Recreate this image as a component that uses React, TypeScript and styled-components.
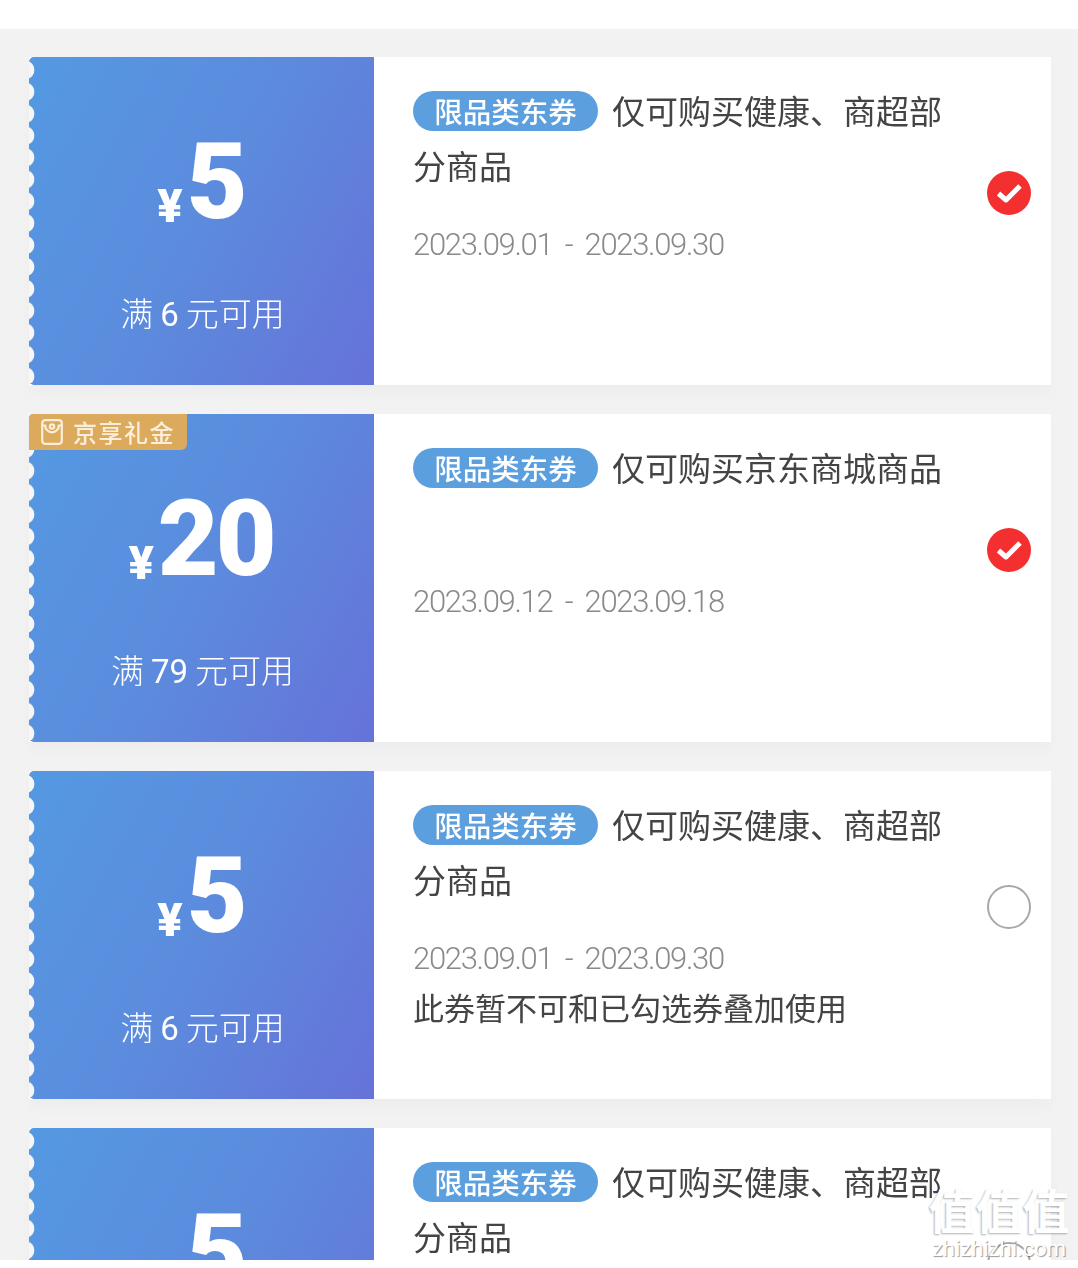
import styled, { createGlobalStyle } from "styled-components"

interface Coupon {
    amount: string
    min: string
    scope: string
    date: string
    note?: string
    gift?: boolean
    checked?: boolean
}

const coupons: Coupon[] = [
    { amount: "5", min: "6", scope: "仅可购买健康、商超部分商品", date: "2023.09.01 - 2023.09.30", checked: true },
    { amount: "20", min: "79", scope: "仅可购买京东商城商品", date: "2023.09.12 - 2023.09.18", gift: true, checked: true },
    { amount: "5", min: "6", scope: "仅可购买健康、商超部分商品", date: "2023.09.01 - 2023.09.30", note: "此券暂不可和已勾选券叠加使用" },
    { amount: "5", min: "6", scope: "仅可购买健康、商超部分商品", date: "2023.09.01 - 2023.09.30" },
]

const App = () => {
    return (
        <Page>
            <GlobalStyle />
            <TopBar />
            <List>
                {coupons.map((c, i) => (
                    <Card key={i}>
                        <Left>
                            {c.gift && (
                                <GiftBadge>
                                    <svg width="22" height="26" viewBox="0 0 22 26" fill="none" stroke="#fbeedb" strokeWidth="2.2">
                                        <rect x="1.2" y="1.2" width="19.6" height="23.6" rx="3" />
                                        <path d="M1.2 6.5h3a6.8 6.8 0 0 0 13.6 0h3" />
                                        <circle cx="11" cy="7.5" r="2.2" />
                                    </svg>
                                    <span>京享礼金</span>
                                </GiftBadge>
                            )}
                            <Price>
                                <Yen>¥</Yen>
                                <Amount>{c.amount}</Amount>
                            </Price>
                            <Threshold>满<Digit>{c.min}</Digit>元可用</Threshold>
                        </Left>
                        <Body>
                            <Content>
                                <Title>
                                    <Tag>限品类东券</Tag>
                                    {c.scope}
                                </Title>
                                <DateText>{c.date}</DateText>
                                {c.note && <Note>{c.note}</Note>}
                            </Content>
                            {c.checked ? (
                                <CheckIcon width="44" height="44" viewBox="0 0 44 44">
                                    <circle cx="22" cy="22" r="22" fill="#f3302f" />
                                    <path d="M11.5 22.5l7.5 6.5L33 15" fill="none" stroke="#fff" strokeWidth="5" strokeLinejoin="round" />
                                </CheckIcon>
                            ) : (
                                <Unchecked />
                            )}
                        </Body>
                    </Card>
                ))}
            </List>
            <BottomBar />
            <Watermark>
                <WatermarkGlyphs>值值值</WatermarkGlyphs>
                <WatermarkUrl>zhizhizhi.com</WatermarkUrl>
            </Watermark>
        </Page>
    )
}

const GlobalStyle = createGlobalStyle`
    body {
        margin: 0;
        background: #fff;
        font-family: "Noto Sans CJK SC", "Noto Sans", sans-serif;
    }
`

const Page = styled.div`
    position: relative;
    width: 1078px;
    height: 1268px;
    overflow: hidden;
    background: #fff;
`

const TopBar = styled.div`
    height: 29px;
    background: #fff;
`

const BottomBar = styled.div`
    height: 8px;
    background: #fff;
`

const List = styled.div`
    height: 1231px;
    box-sizing: border-box;
    padding: 28px 27px 0 29px;
    display: flex;
    flex-direction: column;
    gap: 29px;
    overflow: hidden;
    background: #f2f2f2;
    filter: blur(0.5px);
`

const Card = styled.div`
    flex: none;
    display: flex;
    height: 328px;
    background: #fff;
    box-shadow: 0 9px 14px rgba(0, 0, 0, 0.025);
`

const Left = styled.div`
    position: relative;
    flex: none;
    width: 345px;
    box-sizing: border-box;
    padding-top: 68px;
    display: flex;
    flex-direction: column;
    align-items: center;
    color: #fff;
    border-radius: 5px 0 0 5px;
    background: linear-gradient(118deg, #5499e2 0%, #5c8bdd 50%, #6672d9 100%);
    &::before {
        content: "";
        position: absolute;
        left: 0;
        top: 2px;
        bottom: 2px;
        width: 6px;
        background: radial-gradient(circle at -4px 50%, #f8f6f4 9px, transparent 9.7px) 0 0 / 6px 21.9px repeat-y;
    }
`

const GiftBadge = styled.div`
    position: absolute;
    z-index: 1;
    left: 0;
    top: 0;
    width: 158px;
    height: 36px;
    box-sizing: border-box;
    padding-left: 12px;
    display: flex;
    align-items: center;
    gap: 10px;
    background: #dcaa5c;
    border-radius: 4px 0 6px 0;
    color: #fbeedb;
    font-size: 24px;
    font-weight: 500;
    line-height: 32px;
    letter-spacing: 1.5px;
    white-space: nowrap;
`

const Price = styled.div`
    display: flex;
    align-items: flex-end;
    height: 116px;
    margin-left: -1px;
`

const Yen = styled.span`
    font-family: "Roboto", sans-serif;
    font-weight: 900;
    font-size: 47px;
    line-height: 50px;
    margin-right: 4px;
    margin-bottom: 10px;
`

const Amount = styled.span`
    font-family: "Roboto", sans-serif;
    font-weight: 900;
    font-size: 105px;
    line-height: 116px;
    letter-spacing: -3px;
`

const Threshold = styled.div`
    margin-top: 49px;
    margin-left: 2px;
    font-size: 33px;
    font-weight: 300;
    line-height: 44px;
    white-space: nowrap;
`

const Digit = styled.span`
    font-family: "Roboto", sans-serif;
    font-weight: 400;
    margin: 0 7px 0 7px;
`

const Body = styled.div`
    flex: 1;
    display: flex;
    align-items: flex-start;
    padding: 26px 20px 0 39px;
`

const Content = styled.div`
    flex: none;
    width: 534px;
`

const Title = styled.div`
    min-height: 110px;
    font-size: 33px;
    line-height: 55px;
    font-weight: 400;
    color: #444;
`

const Tag = styled.span`
    display: inline-flex;
    align-items: center;
    justify-content: center;
    width: 185px;
    height: 40px;
    margin-right: 14px;
    vertical-align: 1px;
    border-radius: 20px;
    background: #5b9fdf;
    color: #fff;
    font-size: 28.5px;
    font-weight: 500;
    line-height: 40px;
`

const DateText = styled.div`
    margin-top: 28px;
    font-family: "Roboto", sans-serif;
    font-weight: 300;
    font-size: 31px;
    line-height: 48px;
    letter-spacing: -1.3px;
    word-spacing: 6px;
    color: #8a8a8a;
    white-space: nowrap;
`

const Note = styled.div`
    font-size: 31px;
    font-weight: 400;
    line-height: 48px;
    color: #444;
    white-space: nowrap;
`

const CheckIcon = styled.svg`
    flex: none;
    margin: 88px 0 0 auto;
`

const Unchecked = styled.div`
    flex: none;
    width: 44px;
    height: 44px;
    box-sizing: border-box;
    margin: 88px 0 0 auto;
    border: 2px solid #a8a8a8;
    border-radius: 50%;
`

const Watermark = styled.div`
    position: absolute;
    left: 928px;
    top: 1180px;
    width: 142px;
    text-align: center;
    color: #fff;
    pointer-events: none;
`

const WatermarkGlyphs = styled.div`
    font-size: 47px;
    line-height: 58px;
    font-weight: 700;
    white-space: nowrap;
    text-shadow: -1px 1px 2px rgba(0, 0, 0, 0.3);
`

const WatermarkUrl = styled.div`
    font-family: "Roboto", sans-serif;
    font-size: 22px;
    line-height: 22px;
    white-space: nowrap;
    text-shadow: 1px 1px 1px rgba(0, 0, 0, 0.4);
`

export default App
